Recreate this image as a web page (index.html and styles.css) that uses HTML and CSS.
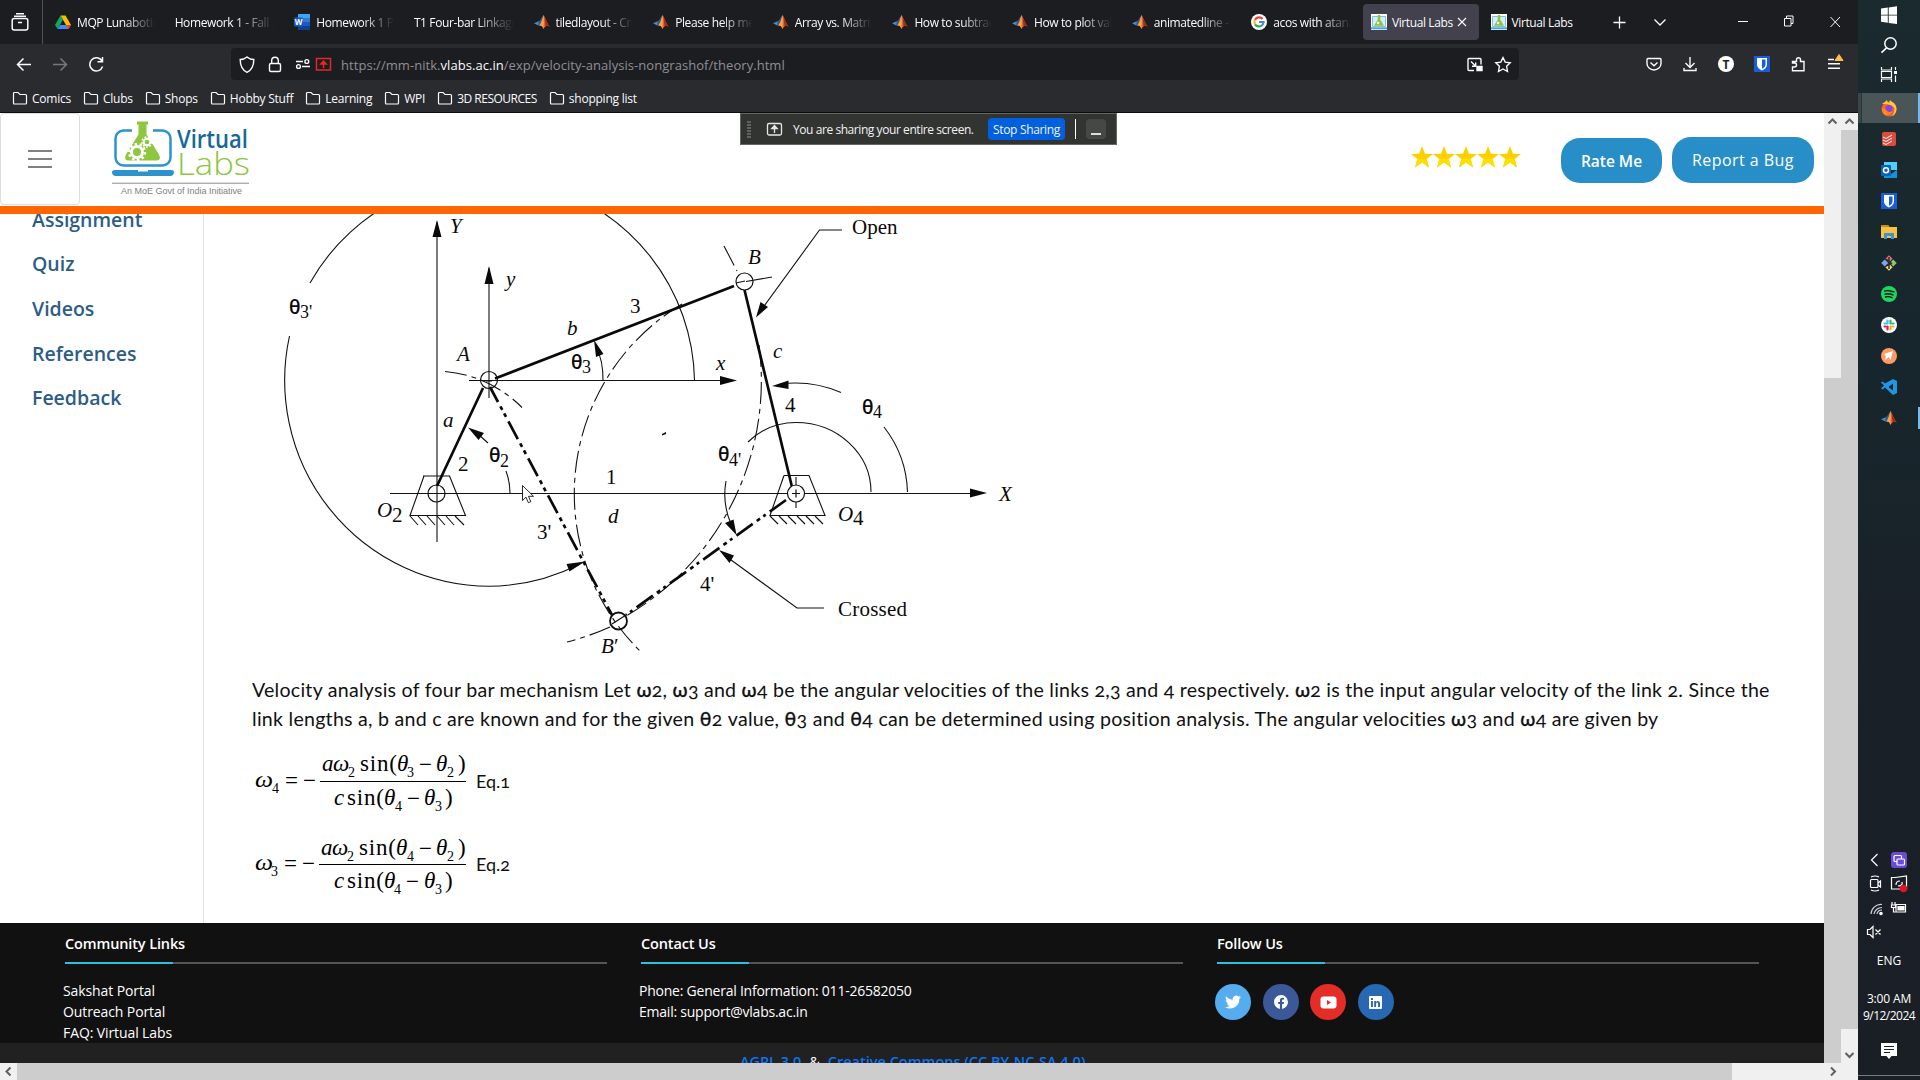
FILE: index.html
```html
<!DOCTYPE html>
<html lang="en">
<head>
<meta charset="utf-8">
<title>Virtual Labs</title>
<link rel="stylesheet" href="styles.css">
</head>
<body>
<svg class="defs" width="0" height="0" aria-hidden="true">
  <symbol id="matlab" viewBox="0 0 16 16"><path d="M0 9.2 4.6 7.3 7 9 4.300 11.500Z" fill="#3f8fd0"/><path d="M4.600 7.300C6.500 6.500 7.600 3 9.500 1.200L7.800 8.700 5.800 11 4.300 11.500Z" fill="#2a5d8f"/><path d="M9.500 1C11 2.500 12.500 8.500 16 13.200 13.500 11.300 12 11 9.500 15 8.500 12.500 7.400 11.300 5 11.700 7.500 9.500 8.500 4 9.500 1Z" fill="#e0622a"/><path d="M9.500 1C10.400 5 9.800 10 9.500 15 8.500 12.500 7.400 11.300 5 11.700 7.500 9.500 8.500 4 9.500 1Z" fill="#f6a04d"/><path d="M10.500 2.500C12 6 13.500 10 16 13.200 14 11.500 12.700 11.400 11.500 12.300Z" fill="#a52a1c"/></symbol>
  <symbol id="folder" viewBox="0 0 16 16"><path d="M1.500 13V3.500a1 1 0 0 1 1-1H6l2 2h5.500a1 1 0 0 1 1 1V13a1 1 0 0 1-1 1h-11a1 1 0 0 1-1-1Z" fill="none" stroke="#fbfbfe" stroke-width="1.200"/></symbol>
  <symbol id="vlabs" viewBox="0 0 16 16"><path d="M0 0h16v16H0z" fill="#fff"/><path d="M1.500 2.500h13v10h-13z" fill="#d7edf8" stroke="#7cc0e4"/><path d="M6.800 1h2.400v4.500l3.800 6.300H3l3.800-6.300Z" fill="#8cc63f"/><circle cx="7" cy="9" r="1.300" fill="#fff"/><path d="M0 13.300h16v2H0z" fill="#4aa5d6"/></symbol>
  <symbol id="bitwarden" viewBox="0 0 16 16"><path d="M0 0h16v16H0z" fill="#175ddc"/><path d="M3 2h10v6.500c0 3-2.500 4.800-5 6-2.500-1.200-5-3-5-6Z" fill="#fff"/><path d="M8 3.500h3.500V8.500c0 2-1.700 3.300-3.500 4.200Z" fill="#175ddc"/></symbol>
  <symbol id="star" viewBox="0 0 22 22"><path d="M11 0l3 7.700 8 .3-6.300 5 2.300 8.500-7-4.900-7 4.900L6.300 13 0 8l8-.3Z" fill="#ffd000"/><path d="M6.300 13H15.700l2.300 8.500-7-4.900-7 4.900Z" fill="#ffdf00"/></symbol>
</svg>

<div class="desktop">
<div class="browser">
  <div class="tabbar">
    <div class="fxview"><svg width="18" height="18" viewBox="0 0 18 18" fill="none" stroke="#fbfbfe" stroke-width="1.500"><rect x="1.200" y="5.500" width="15.600" height="11.500" rx="2"/><path d="M3 3.200h12M5 .8h8M7 9.500h4"/></svg></div>
    <div class="tabs">
      <div class="tab"><svg width="16" height="16" viewBox="0 0 16 16"><path d="M5.500 1.500h5L16 11h-5Z" fill="#ffba00"/><path d="M5.500 1.500 0 11l2.600 4L8 5.800Z" fill="#11a861"/><path d="M5.200 11H16l-2.600 4H2.600Z" fill="#4688f4"/><path d="M11 11h5l-2.600 4Z" fill="#ea4335"/></svg><span>MQP Lunabotics</span></div>
      <div class="tab"><span>Homework 1 - Fall 2024</span></div>
      <div class="tab"><svg width="16" height="16" viewBox="0 0 16 16"><path d="M4 0h12v4H4z" fill="#41a5ee"/><path d="M4 4h12v4H4z" fill="#2b7cd3"/><path d="M4 8h12v4H4z" fill="#185abd"/><path d="M4 12h12v4H4z" fill="#103f91"/><rect y="3.500" width="9" height="9" rx="1" fill="#185abd"/><text x="4.500" y="11" text-anchor="middle" fill="#fff" class="w-mark">W</text></svg><span>Homework 1 Problems</span></div>
      <div class="tab"><span>T1 Four-bar Linkage</span></div>
      <div class="tab"><svg width="16" height="16"><use href="#matlab"/></svg><span>tiledlayout - Create</span></div>
      <div class="tab"><svg width="16" height="16"><use href="#matlab"/></svg><span>Please help me with</span></div>
      <div class="tab"><svg width="16" height="16"><use href="#matlab"/></svg><span>Array vs. Matrix Op</span></div>
      <div class="tab"><svg width="16" height="16"><use href="#matlab"/></svg><span>How to subtract a</span></div>
      <div class="tab"><svg width="16" height="16"><use href="#matlab"/></svg><span>How to plot values</span></div>
      <div class="tab"><svg width="16" height="16"><use href="#matlab"/></svg><span>animatedline - M</span></div>
      <div class="tab"><svg width="16" height="16" viewBox="0 0 16 16" fill="none" stroke-width="2.200"><circle cx="8" cy="8" r="8" fill="#fff" stroke="none"/><path d="M11.600 5A4.600 4.600 0 0 0 4 5.700" stroke="#ea4335"/><path d="M4 5.700a4.600 4.600 0 0 0 0 4.600" stroke="#fbbc05"/><path d="M4 10.300a4.600 4.600 0 0 0 7 1" stroke="#34a853"/><path d="M11 11.300A4.600 4.600 0 0 0 12.600 8H8" stroke="#4285f4"/></svg><span>acos with atan2</span></div>
      <div class="tab active"><svg width="16" height="16"><use href="#vlabs"/></svg><span>Virtual Labs</span><svg class="x" width="10" height="10" viewBox="0 0 10 10"><path d="M1 1l8 8M9 1 1 9" stroke="#fbfbfe" stroke-width="1.100"/></svg></div>
      <div class="tab"><svg width="16" height="16"><use href="#vlabs"/></svg><span>Virtual Labs</span></div>
    </div>
    <div class="tabtools"><svg width="270" height="44" viewBox="1588 0 270 44" fill="none" stroke="#fbfbfe" stroke-width="1.300"><path d="M1613.500 22.500h12M1619.500 16.500v12M1654.500 19.500l5.500 5.500 5.500-5.500"/><path d="M1738 21.500h10M1784.500 18.500h6.500v7.500h-6.500zM1786.500 18v-2h6.500v7.500h-2M1830.500 17l9.500 10M1840 17l-9.500 10" stroke-width="1"/></svg></div>
  </div>
  <div class="navbar">
    <svg class="navbtns" width="231" height="36" viewBox="0 47 231 36" fill="none" stroke="#fbfbfe" stroke-width="1.500"><path d="M31 64.500H18M23.500 58.500l-6 6 6 6"/><path d="M53 64.500h13M60.500 58.500l6 6-6 6" stroke="#77777d"/><path d="M102 61a6.600 6.600 0 1 0 .6 5.500M102.500 57v4.800h-5"/></svg>
    <div class="urlbar">
      <svg width="110" height="32" viewBox="231 48 110 32" fill="none" stroke="#fbfbfe" stroke-width="1.400"><path d="M247 57c2 1.800 4.500 2.500 6.800 2.500 0 6-1.800 10.500-6.800 12.800-5-2.300-6.800-6.800-6.800-12.800 2.300 0 4.800-.7 6.800-2.500Z"/><rect x="269.500" y="63.500" width="11" height="8" rx="1.500"/><path d="M271.700 63.500V60.500a3.300 3.300 0 0 1 6.600 0v3"/><path d="M296 61.500h7M302 66.500h8"/><circle cx="306.800" cy="61.500" r="1.900"/><circle cx="298.500" cy="66.500" r="1.900"/><path d="M316.500 58.500h14v11.500h-14z" stroke="#e22828" stroke-width="1.500"/><path d="M323.500 68v-5M320.800 64l2.700-3 2.700 3Z" stroke="#e22828" fill="#e22828" stroke-width="1.500"/></svg>
      <div class="url">https://mm-nitk.<b>vlabs.ac.in</b>/exp/velocity-analysis-nongrashof/theory.html</div>
      <svg class="urlend" width="52" height="32" viewBox="1467 48 52 32" fill="none" stroke="#fbfbfe" stroke-width="1.400"><path d="M1474 70.500h-5a1 1 0 0 1-1-1v-10a1 1 0 0 1 1-1h11a1 1 0 0 1 1 1v5M1471 61.500l4.500 4.500M1475.700 62.500v3.700h-3.700"/><path d="M1477 66.500h5v4h-5z" fill="#fff"/><path d="M1503 57.500l2.200 4.600 5 .7-3.600 3.500.9 5.200-4.500-2.500-4.500 2.500.9-5.200-3.600-3.500 5-.7Z"/></svg>
    </div>
    <svg width="339" height="36" viewBox="1519 47 339 36" fill="none" stroke="#fbfbfe" stroke-width="1.400"><path d="M1648 58.500h12a1 1 0 0 1 1 1v4a7 6.500 0 0 1-14 0v-4a1 1 0 0 1 1-1ZM1650.500 62.500l3.500 3.300 3.500-3.300"/><path d="M1690 57v10M1685.500 63l4.500 4.500 4.500-4.500M1684 68v2.500h12V68"/><circle cx="1726" cy="64" r="8" fill="#fff" stroke="none"/><svg x="1754" y="56" width="16" height="16"><use href="#bitwarden" stroke="none"/></svg><path d="M1792.500 63h2a2 2 0 0 1 0 4h-2v3.800h11.500v-9.300h-3.500v-1.800a2 2 0 0 0-4 0v1.800h-4Z"/><path d="M1828 59.500h6M1828 63.800h12M1828 68.200h12"/><path d="M1839 54.500l4 6h-8Z" fill="#ffbd4f" stroke="#ffbd4f" stroke-width="1"/><text x="1726" y="68.500" text-anchor="middle" class="t-mark">T</text></svg>
  </div>
  <div class="bookmarks">
    <div><svg width="16" height="16"><use href="#folder"/></svg><span>Comics</span></div>
    <div><svg width="16" height="16"><use href="#folder"/></svg><span>Clubs</span></div>
    <div><svg width="16" height="16"><use href="#folder"/></svg><span>Shops</span></div>
    <div><svg width="16" height="16"><use href="#folder"/></svg><span>Hobby Stuff</span></div>
    <div><svg width="16" height="16"><use href="#folder"/></svg><span>Learning</span></div>
    <div><svg width="16" height="16"><use href="#folder"/></svg><span>WPI</span></div>
    <div><svg width="16" height="16"><use href="#folder"/></svg><span class="caps">3D RESOURCES</span></div>
    <div><svg width="16" height="16"><use href="#folder"/></svg><span>shopping list</span></div>
  </div>

  <div class="viewport">
    <div class="page">
      <header class="site-header">
        <div class="burger"><i></i><i></i><i></i></div>
        <svg class="logo" width="142" height="78" viewBox="110 119 142 78">
          <rect x="115.500" y="130.500" width="55" height="35" rx="8" fill="none" stroke="#2c94cb" stroke-width="2.500"/>
          <path d="M132 126h21v10h-21z" fill="#fff"/>
          <path d="M137 121.500h11v3h-1.500v10l12.500 20q3 6-3 6h-27q-6 0-3-6l12.500-20v-10H137Z" fill="#8dc63f"/>
          <circle cx="137" cy="152" r="5.500" fill="none" stroke="#fff" stroke-width="3"/><circle cx="137" cy="152" r="8" fill="none" stroke="#fff" stroke-width="2.500" stroke-dasharray="2.600 2.400"/>
          <circle cx="147" cy="142" r="3.300" fill="none" stroke="#fff" stroke-width="2"/><circle cx="147" cy="142" r="5" fill="none" stroke="#fff" stroke-width="1.600" stroke-dasharray="1.800 1.600"/>
          <path d="M112 172q0-2 3-2h23v1.500h10V170h23q3 0 3 2 0 4-4 4h-54q-4 0-4-4Z" fill="#2c94cb"/>
          <text x="177" y="148" textLength="71" lengthAdjust="spacingAndGlyphs" class="l-virtual">Virtual</text>
          <text x="177" y="175" textLength="73" lengthAdjust="spacingAndGlyphs" class="l-labs">Labs</text>
          <path d="M112 183.200h137" stroke="#8a8a8a"/>
          <text x="121" y="194" textLength="121" lengthAdjust="spacingAndGlyphs" class="l-tag">An MoE Govt of India Initiative</text>
        </svg>
        <div class="header-right">
          <div class="stars"><svg width="22" height="22"><use href="#star"/></svg><svg width="22" height="22"><use href="#star"/></svg><svg width="22" height="22"><use href="#star"/></svg><svg width="22" height="22"><use href="#star"/></svg><svg width="22" height="22"><use href="#star"/></svg></div>
          <div class="btn rate">Rate Me</div>
          <div class="btn bug">Report a Bug</div>
        </div>
      </header>
      <div class="content">
        <nav class="sidebar">
          <a>Assignment</a><a>Quiz</a><a>Videos</a><a>References</a><a>Feedback</a>
        </nav>
        <main>
          <svg class="diagram" width="800" height="446" viewBox="252 214 800 446">
            <g fill="none" stroke="#111" stroke-width="1.100">
              <path d="M437 222V542M489 268V398M469 380.500H722M390 493.500H972"/>
              <path d="M694.500 380A205.500 206 0 0 0 310 283M289.500 336A205.500 206 0 0 0 489 586.300A205.500 206 0 0 0 580 564"/>
              <g stroke-dasharray="22 5 5 5"><path d="M445 371.500A123 123 0 0 1 522 407.500"/><path d="M682 304A221 221 0 0 0 640 651"/><path d="M724 246 737 271M759 345A272 272 0 0 1 626 616M610 627Q590 636 567 642"/></g>
              <path d="M746 281.500 772 277M736 283l9-2"/>
              <path d="M488 443 478 434M506 471Q510 482 510 493M603 380Q603 360 597 350"/>
              <path d="M907.500 492A111 111 0 0 0 884 427M841 392.500Q812 380 780 384"/>
              <path d="M871 492A75 69.500 0 0 0 796 422.500Q768 422.500 748 442M726 481Q722 503 731 524"/>
              <path d="M842 230H819.500L762 309M824 608H797L727 557"/>
              <path d="M423 476H450M424 476 410 515.500H465.500L449.500 476M784 475.500H809L825 515.500H770L784 475.500M796 477v31"/>
              <path d="M410 516l8 9M418 516l8 9M427 516l8 9M437 516l8 9M446 516l8 9M455 516l9 9M770 516l8 8M779 516l8 8M788 516l8 8M797 516l8 8M806 516l8 8M815 516l8 8"/>
            </g>
            <g fill="#0a0a0a"><path d="M437 220l4.500 17h-9ZM489 266l4.500 18h-9ZM737 380.500l-17 4.500v-9ZM987 493l-17 4.500v-9ZM594 340l9.500 14-7.500 3ZM585 561.500l-15.500 10-3-7.500ZM468 427.500l16 5.500-5.500 7ZM772 386l16.500-5.500v8.500ZM756 317.500l4.500-15.500 7.500 5ZM736.500 535l-11.500-12 8.500-3.500ZM719 550l15 5.500-4.500 7.500Z"/><path d="M662 434l4-2v2l-4 1.500Z"/></g>
            <g fill="none" stroke="#0a0a0a" stroke-width="2.700"><path d="M495 378.500 734 286M744.500 290 792 487M483 388 437 486"/><path d="M490 387 612 615" stroke-dasharray="20 5 4 4 4 5" stroke-dashoffset="3"/><path d="M786 500 626 615" stroke-dasharray="20 5 3 4 4 5"/></g>
            <g fill="none" stroke="#111" stroke-width="1.200"><circle cx="489" cy="380" r="8.500"/><circle cx="744.500" cy="281.500" r="8.500"/><circle cx="436.500" cy="493.500" r="8.500"/><circle cx="796" cy="493.500" r="8.500" fill="#fff"/><circle cx="618.500" cy="621" r="8.500" stroke-width="1.800"/><path d="M612 624 626 615M792 493.500h8M796 489.500v8M486 381h6"/></g>
            <g class="dg">
              <g class="it"><text x="450" y="233">Y</text><text x="506" y="286">y</text><text x="457" y="361">A</text><text x="567" y="335">b</text><text x="443" y="427">a</text><text x="377" y="517">O</text><text x="608" y="523">d</text><text x="601" y="653">B</text><text x="748" y="264">B</text><text x="773" y="358">c</text><text x="716" y="370">x</text><text x="838" y="521">O</text><text x="999" y="501">X</text></g>
              <text x="630" y="313">3</text><text x="458" y="471">2</text><text x="392" y="522">2</text><text x="606" y="484">1</text><text x="537" y="539">3'</text><text x="614" y="653">′</text><text x="785" y="412">4</text><text x="700" y="591">4'</text><text x="852" y="234">Open</text><text x="838" y="616" textLength="69">Crossed</text><text x="853" y="525">4</text>
              <g class="th"><text x="289" y="314">θ</text><text x="571" y="369">θ</text><text x="489" y="462">θ</text><text x="862" y="414">θ</text><text x="718" y="461">θ</text></g>
              <g class="sub"><text x="300" y="318">3'</text><text x="582" y="373">3</text><text x="500" y="467">2</text><text x="873" y="418">4</text><text x="729" y="466">4'</text></g>
            </g>
            <path d="M522.500 485.500v15l3.500-3.300 2.300 5.500 2.500-1-2.300-5.400h5Z" fill="#fff" stroke="#111" stroke-width=".9"/>
          </svg>
          <p class="para"><span class="l1">Velocity analysis of four bar mechanism Let <b>ω</b>2, <b>ω</b>3 and <b>ω</b>4 be the angular velocities of the links 2,3 and 4 respectively. <b>ω</b>2 is the input angular velocity of the link 2. Since the</span><br><span class="l2">link lengths a, b and c are known and for the given <b>θ</b>2 value, <b>θ</b>3 and <b>θ</b>4 can be determined using position analysis. The angular velocities <b>ω</b>3 and <b>ω</b>4 are given by</span></p>
          <div class="eqs">
            <div class="eq"><svg width="216" height="83" viewBox="252 740 216 83"><g class="ma">
              <text class="it" x="255" y="787" textLength="18" lengthAdjust="spacingAndGlyphs">ω</text><text class="ms" x="272" y="793">4</text><text x="285" y="788">=</text><text x="303" y="788">−</text><path d="M320 781.500h146" stroke="#000" stroke-width="1.200"/>
              <text class="it" x="322" y="771">a</text><text class="it" x="333" y="771">ω</text><text class="ms" x="348" y="777">2</text><text x="360" y="771" textLength="37">sin(</text><text class="it" x="397" y="771">θ</text><text class="ms" x="407" y="777">3</text><text x="419" y="772">−</text><text class="it" x="436" y="771">θ</text><text class="ms" x="447" y="777">2</text><text x="458" y="771">)</text>
              <text class="it" x="334" y="805">c</text><text x="347" y="805" textLength="37">sin(</text><text class="it" x="384" y="805">θ</text><text class="ms" x="395" y="811">4</text><text x="407" y="806">−</text><text class="it" x="424" y="805">θ</text><text class="ms" x="435" y="811">3</text><text x="445" y="805">)</text></g></svg><span>Eq.1</span></div>
            <div class="eq"><svg width="216" height="83" viewBox="252 740 216 83"><g class="ma">
              <text class="it" x="255" y="787" textLength="18" lengthAdjust="spacingAndGlyphs">ω</text><text class="ms" x="271" y="793">3</text><text x="284" y="788">=</text><text x="302" y="788">−</text><path d="M319 781.500h147" stroke="#000" stroke-width="1.200"/>
              <text class="it" x="321" y="772">a</text><text class="it" x="332" y="772">ω</text><text class="ms" x="347" y="778">2</text><text x="359" y="772" textLength="37">sin(</text><text class="it" x="396" y="772">θ</text><text class="ms" x="407" y="778">4</text><text x="419" y="773">−</text><text class="it" x="436" y="772">θ</text><text class="ms" x="447" y="778">2</text><text x="458" y="772">)</text>
              <text class="it" x="334" y="805">c</text><text x="347" y="805" textLength="37">sin(</text><text class="it" x="384" y="805">θ</text><text class="ms" x="394" y="811">4</text><text x="406" y="806">−</text><text class="it" x="424" y="805">θ</text><text class="ms" x="435" y="811">3</text><text x="445" y="805">)</text></g></svg><span>Eq.2</span></div>
          </div>
        </main>
      </div>
      <footer>
        <section><h4>Community Links</h4><p>Sakshat Portal<br>Outreach Portal<br>FAQ: Virtual Labs</p></section>
        <section><h4>Contact Us</h4><p class="contact">Phone: General Information: 011-26582050<br>Email: support@vlabs.ac.in</p></section>
        <section><h4>Follow Us</h4>
          <div class="social">
            <div class="tw"><svg width="16" height="16" viewBox="0 0 24 24"><path fill="#fff" d="M24 4.600a10 10 0 0 1-2.800.8 5 5 0 0 0 2.100-2.700 10 10 0 0 1-3.100 1.200 4.900 4.900 0 0 0-8.400 4.500A14 14 0 0 1 1.700 3.200a4.900 4.900 0 0 0 1.500 6.500 5 5 0 0 1-2.200-.6 4.900 4.900 0 0 0 3.900 4.900 5 5 0 0 1-2.200.1 4.900 4.900 0 0 0 4.600 3.400A10 10 0 0 1 0 19.500a14 14 0 0 0 21.500-12.400A10 10 0 0 0 24 4.600Z"/></svg></div>
            <div class="fb"><svg width="14" height="14" viewBox="0 0 24 24"><path fill="#fff" d="M24 12A12 12 0 1 0 10.100 23.900v-8.400h-3V12h3V9.400c0-3 1.800-4.700 4.500-4.700 1.300 0 2.700.2 2.700.2v3h-1.500c-1.500 0-2 .9-2 1.900V12h3.400l-.5 3.500h-2.800v8.400A12 12 0 0 0 24 12Z"/></svg></div>
            <div class="yt"><svg width="17" height="13" viewBox="0 0 17 13"><rect x=".5" y=".5" width="16" height="12" rx="3" fill="#fff"/><path d="M7 4l4 2.500L7 9Z" fill="#e52d27"/></svg></div>
            <div class="li"><svg width="13" height="13" viewBox="0 0 13 13"><rect width="13" height="13" rx="1" fill="#fff"/><path d="M2 5h1.900v6H2zM2 2h1.900v1.900H2zM5.200 5H7v.9C8 4.500 11 4.500 11 7.500V11H9.100V8c0-2-2-2-2 0v3H5.200Z" fill="#2867b2"/></svg></div>
          </div>
        </section>
      </footer>
      <div class="license"><a>AGPL 3.0</a><span>&amp;</span><a>Creative Commons (CC BY-NC-SA 4.0)</a></div>
    </div>
    <div class="vs inner"><svg width="17" height="17" viewBox="0 0 17 17"><path d="M4.500 10.500l4-4 4 4" fill="none" stroke="#606060" stroke-width="2"/></svg><i></i></div>
    <div class="vs outer"><svg width="17" height="17" viewBox="0 0 17 17"><path d="M4.500 10.500l4-4 4 4" fill="none" stroke="#606060" stroke-width="2"/></svg><i></i><svg width="17" height="51" viewBox="0 0 17 51"><path d="M4.500 24l4 4 4-4" fill="none" stroke="#606060" stroke-width="2"/></svg></div>
  </div>
  <div class="hs"><svg width="17" height="17" viewBox="0 0 17 17"><path d="M10.500 4.500l-4 4 4 4" fill="none" stroke="#606060" stroke-width="2"/></svg><i></i><svg width="109" height="17" viewBox="0 0 109 17"><path d="M99 4.500l4 4-4 4" fill="none" stroke="#606060" stroke-width="2"/></svg></div>

  <div class="share">
    <svg width="52" height="30" viewBox="741 114 52 30"><path d="M749 121.500v18" stroke="#8d8f8d" stroke-width="4" stroke-dasharray="1 2"/><rect x="767.500" y="123.500" width="14" height="11.500" rx="1.500" fill="none" stroke="#e6e6e6" stroke-width="1.300"/><path d="M774.500 133v-6M771.800 128.500l2.700-3 2.700 3Z" stroke="#e6e6e6" stroke-width="1.300" fill="#e6e6e6"/></svg>
    <span class="msg">You are sharing your entire screen.</span>
    <span class="stop">Stop Sharing</span>
    <i class="div"></i><span class="mini"></span>
  </div>
</div>

<div class="taskbar">
  <svg width="62" height="840" viewBox="1858 0 62 840">
    <path d="M1881 8.500l6.800-1v7.200H1881zM1888.700 7.400l8.300-1.200v8.500h-8.300zM1881 15.600h6.800v7.200l-6.800-1zM1888.700 15.600h8.300v8.500l-8.300-1.200z" fill="#fff"/>
    <circle cx="1890.500" cy="43.500" r="5.700" fill="none" stroke="#fff" stroke-width="1.500"/><path d="M1886.500 47.800l-5 4.800" stroke="#fff" stroke-width="1.600"/>
    <path d="M1881.500 67v3h10v-3M1881.500 82v-3h10v3M1881.500 71.500h10v6h-10zM1895.500 67v3M1895.500 75.500v6.500" fill="none" stroke="#fff" stroke-width="1.200"/><path d="M1894 71h3v3h-3z" fill="#fff"/>
    <path d="M1858 93h3.500v30h-3.500z" fill="#39464a"/><path d="M1862 93h56v30h-56z" fill="#4a5558"/><path d="M1918 93h2v30h-2z" fill="#76b9ed"/>
    <circle cx="1889" cy="109" r="7.500" fill="#ff5a36"/><path d="M1882 104q3-2 5-4 0 2 2 3l1-3 1.500 1.500Q1897 104 1896.500 110q-1 5-5 6.500 3-3 3-8-2-5-12.500-4.500Z" fill="#ffc83a"/><circle cx="1889" cy="108.500" r="3.500" fill="#7a4be0"/><path d="M1882 108q3 0 4 2 2 3 6 1.500-2 4-6 3.500-4-1-4-7Z" fill="#ff8a1e"/>
    <rect x="1882" y="132" width="14" height="14" rx="2" fill="#dc4c3e"/><path d="M1883 137l3 1.500 6-3.500M1883 140l3 1.500 6-3.500M1883 143l3 1.500 6-3.500" stroke="#fff" fill="none"/>
    <path d="M1884 162h13v8h-13z" fill="#50d0f8"/><path d="M1884 170l7 4 6-4v8h-13Z" fill="#1490df"/><rect x="1881" y="165" width="10" height="11" rx="1" fill="#0a62b8"/><circle cx="1886" cy="170.300" r="2.500" fill="none" stroke="#fff" stroke-width="1.500"/>
    <svg x="1881" y="193" width="16" height="16"><use href="#bitwarden"/></svg>
    <path d="M1881 225h7l1.500 2h7.500v11h-16z" fill="#f5c242"/><path d="M1881 225h7l1.500 2H1881z" fill="#c98e17"/><path d="M1884 239v-6h10v6h-3v-3h-4v3Z" fill="#3f93d2"/>
    <g transform="rotate(45 1889 263)"><path d="M1883.500 257.500h5v5h-5z" fill="#e8767a"/><path d="M1889.500 257.500h5v5h-5z" fill="#8cc665"/><path d="M1883.500 263.500h5v5h-5z" fill="#7da6f0"/><path d="M1889.500 263.500h5v5h-5z" fill="#f6d87a"/></g><path d="M1889 257v12M1886 259l6 5M1886 266l6-3" stroke="#2d2d2d" stroke-width="1.500"/>
    <circle cx="1889" cy="294" r="8" fill="#1ed760"/><path d="M1884 291.200q5-1.500 10.500 1M1884.500 294.200q4.500-1.200 9 1M1885 297q4-1 7.500.8" fill="none" stroke="#111" stroke-width="1.400"/>
    <circle cx="1889" cy="325" r="8" fill="#fff"/><g stroke-width="2.200" stroke-linecap="round"><path d="M1887.500 320.500v3M1884.500 323.500h3" stroke="#36c5f0"/><path d="M1890.500 320.500v3M1893.500 323.500h-1" stroke="#2eb67d"/><path d="M1890.500 326.500h3M1890.500 328.500v1" stroke="#ecb22e"/><path d="M1887.500 326.500v3M1884.500 326.500h1" stroke="#e01e5a"/></g>
    <circle cx="1889" cy="356" r="8" fill="#ff9a62"/><path d="M1884 354l9-3-2.500 9-2-3-3.500 3.500.8-4.500Z" fill="#fff"/>
    <path d="M1893 379l4 2v12l-4 2-8-7.500-2.500 2-1.500-1 3-3-3-3 1.500-1 2.500 2Zm0 4.500-4.500 3.500 4.500 3.500Z" fill="#2196e3"/>
    <svg x="1881" y="410" width="16" height="16"><use href="#matlab"/></svg><path d="M1918 407h2v22h-2z" fill="#76b9ed"/>
  </svg>
  <svg width="62" height="108" viewBox="1858 840 62 108" fill="none" stroke="#fff" stroke-width="1.200"><path d="M1877.500 854l-6 6 6 6"/><rect x="1891" y="852" width="16" height="16" rx="3" fill="#6a4bd6" stroke="none"/><rect x="1894" y="855.500" width="7.500" height="6" rx="1"/><rect x="1897" y="859" width="7.500" height="6" rx="1" fill="#6a4bd6"/><rect x="1870.500" y="879.500" width="7.500" height="8" rx="1"/><path d="M1878 883l2.500-2v6l-2.500-2M1871 877q4-2 8 0M1871 890q4 2 8 0"/><path d="M1891.500 877.500h4l11-1.500v13h-15zM1896 885q0-4 4-4M1898 886q5 0 4-4"/><circle cx="1903.500" cy="888.500" r="3.700" fill="#e81123" stroke="none"/><path d="M1871 914a10 10 0 0 1 11-9.500M1874 914a8 8 0 0 1 8-6.500M1877 914a5 5 0 0 1 5-4" stroke="#cfd3d6"/><circle cx="1881" cy="913.500" r="1.200" fill="#fff"/><path d="M1896 904.500h9.500v7.500h-9.500z"/><path d="M1898 906.500h6v3.500h-6z" fill="#fff"/><path d="M1892 902v3M1895 902v3M1891.500 905h4v2.500h-4zM1893.500 908v4h2"/><path d="M1867.500 929.500h2.500l3-3v11l-3-3h-2.500zM1875.500 929.500l5 5M1880.500 929.500l-5 5"/></svg>
  <div class="eng">ENG</div>
  <div class="clock">3:00 AM<br><span class="date">9/12/2024</span></div>
  <svg width="62" height="53" viewBox="1858 1027 62 53"><path d="M1881 1043h16v13h-5.500l-2.500 3-2.500-3h-5.500Z" fill="#fff"/><path d="M1884 1046.500h10M1884 1049.500h10M1884 1052.500h6" stroke="#1b2026"/><path d="M1858 1075.500h62" stroke="#767b80"/></svg>
</div>
</div>
</body>
</html>
```
FILE: styles.css
```css
* { box-sizing: border-box; }
body { margin: 0; width: 1920px; height: 1080px; overflow: hidden; background: #fff; font-family: "Open Sans", "Noto Sans", sans-serif; }
svg { display: block; flex: none; }
.defs { position: absolute; }
.desktop { display: flex; height: 1080px; }
.browser { position: relative; width: 1858px; height: 1080px; display: flex; flex-direction: column; flex: none; }

.tabbar { height: 44px; background: #1c1d20; display: flex; }
.fxview { width: 43px; border-right: 1px solid #505157; padding: 13px 0 0 11px; flex: none; }
.tabs { display: flex; gap: 4px; padding: 4px 0 0 4px; width: 1555px; flex: none; }
.tab { width: 115.630px; height: 36px; border-radius: 4px; padding: 0 8px; display: flex; align-items: center; gap: 6px; color: #fbfbfe; font-size: 12px; flex: none; }
.tab span { flex: 1; min-width: 0; overflow: hidden; white-space: nowrap; letter-spacing: -0.380px; -webkit-mask-image: linear-gradient(to right, #000 60%, transparent); mask-image: linear-gradient(to right, #000 60%, transparent); }
.tab.active { background: #42414d; gap: 5px; }
.tab.active span, .tab:last-child span { -webkit-mask-image: none; mask-image: none; overflow: visible; }
.tab:last-child { gap: 5px; }
.tab.active .x { margin-right: 4px; }
.tabtools { margin-left: auto; margin-right: -10px; width: 270px; margin-left: -10px; }
.w-mark { font: bold 8px "Open Sans", sans-serif; }
.t-mark { font: bold 12px "Open Sans", sans-serif; fill: #1c1d20; stroke: none; }

.navbar { height: 36px; background: #2a2b2f; display: flex; align-items: flex-start; }
.navbar > svg { margin-top: 3px; margin-bottom: -3px; }
.urlbar { width: 1288px; height: 32px; margin-top: 4px; background: #1c1d20; border-radius: 4px; display: flex; align-items: center; flex: none; }
.url { color: #8f8f95; font-size: 13px; letter-spacing: 0.050px; white-space: nowrap; padding-top: 2px; }
.url b { color: #fbfbfe; font-weight: 400; }
.urlend { margin-left: auto; }

.bookmarks { height: 33px; background: #2a2b2f; border-bottom: 1px solid #0c0c0d; display: flex; align-items: center; padding: 4px 0 0 12px; color: #fbfbfe; font-size: 12px; }
.bookmarks div { display: flex; align-items: center; gap: 4px; margin-right: 12px; white-space: nowrap; }
.bookmarks span { letter-spacing: -0.240px; }
.bookmarks .caps { letter-spacing: -0.500px; }

.viewport { display: flex; height: 950px; flex: none; }
.page { width: 1824px; background: #fff; overflow: hidden; display: flex; flex-direction: column; }
.site-header { height: 101px; border-bottom: 8px solid #f60; display: flex; align-items: flex-start; flex: none; }
.burger { width: 80px; height: 92px; border: 1px solid #dedede; border-radius: 4px; display: flex; flex-direction: column; gap: 6px; padding: 36px 27px 0; }
.burger i { height: 2px; background: #808080; }
.logo { margin: 6px 0 0 30px; }
.header-right { margin-left: auto; display: flex; padding-right: 10px; }
.stars { display: flex; margin: 33px 40px 0 0; }
.btn { background: #288ec8; color: #fff; border-radius: 19px; display: flex; align-items: center; justify-content: center; white-space: nowrap; }
.rate { width: 101px; height: 45px; margin: 25px 10px 0 0; font-size: 15.500px; font-weight: 600; }
.bug { width: 142px; height: 46px; margin-top: 24px; font-size: 16px; letter-spacing: 0.450px; }
.l-virtual { font: 600 26px "Open Sans", sans-serif; fill: #15689b; }
.l-labs { font: 300 32px "Open Sans", sans-serif; fill: #8dc63f; }
.l-tag { font: 9.500px "Liberation Sans", sans-serif; fill: #808080; }

.content { height: 709px; display: flex; overflow: hidden; flex: none; }
.sidebar { width: 204px; border-right: 1px solid #e2e2e2; padding-left: 32px; flex: none; display: flex; flex-direction: column; margin-top: -16.500px; }
.sidebar a { height: 44.700px; line-height: 44.700px; flex: none; color: #2c5d87; font-weight: 600; font-size: 19.500px; }
main { padding-left: 48px; font-family: Lato, "Open Sans", sans-serif; color: #212529; font-variant-numeric: oldstyle-nums; }
.para { margin: 15px 0 0; font-size: 19.600px; line-height: 29px; white-space: nowrap; color: #111; height: 65px; }
.para b { font-weight: 500; -webkit-text-stroke: 0.300px #111; }
.l1 { letter-spacing: 0.240px; }
.l2 { letter-spacing: 0.255px; }
.eq { display: flex; height: 83px; align-items: center; gap: 8px; font-size: 18px; color: #111; }
.eq span { padding-bottom: 2px; }
.dg { font: 21px "Liberation Serif", serif; fill: #0a0a0a; }
.it { font-style: italic; }
.th { font: 600 19px "Open Sans", sans-serif; }
.sub { font-size: 18px; }
.ma { font: 23px "Liberation Serif", serif; fill: #000; }
.ms { font-size: 14px; }

footer { height: 120px; background: #111; display: flex; padding-left: 65px; gap: 34px; flex: none; color: #fff; }
footer section { width: 542px; }
footer h4 { margin: 0; height: 41px; line-height: 42px; font-size: 14.500px; font-weight: 600; letter-spacing: -0.130px; border-bottom: 2px solid #555; position: relative; }
footer h4::after { content: ""; position: absolute; left: 0; bottom: -2px; width: 108px; height: 2px; background: #2cc0da; }
footer p { margin: 16px 0 0 -2px; font: 14px/21px "Open Sans", sans-serif; letter-spacing: -0.100px; white-space: nowrap; }
footer .contact { letter-spacing: -0.230px; }
.social { display: flex; gap: 11.500px; margin: 20px 0 0 -2px; }
.social div { width: 36px; height: 36px; border-radius: 50%; display: flex; align-items: center; justify-content: center; }
.tw { background: #55acee; } .fb { background: #3b5998; } .yt { background: #e52d27; } .li { background: #2867b2; }
.license { height: 20px; background: #212121; color: #fff; overflow: hidden; display: flex; gap: 8px; padding: 8px 0 0 740px; font-size: 14.500px; line-height: 21px; white-space: nowrap; flex: none; }
.license a { color: #0b75f0; font-weight: 600; }

.vs { width: 17px; display: flex; flex-direction: column; background: #f0f0f0; }
.inner i { margin-top: 248px; flex: 1; background: #cdcdcd; }
.outer { height: 967px; flex: none; position: relative; }
.outer i { flex: 1; background: #cdcdcd; }
.hs { height: 17px; width: 1841px; display: flex; background: #f0f0f0; }
.hs i { flex: 1; background: #cdcdcd; }

.share { position: absolute; left: 740px; top: 113px; width: 377px; height: 32px; background: #323432; border: 1px solid #646664; display: flex; align-items: center; color: #f2f2f2; font-size: 12px; white-space: nowrap; }
.msg { width: 195px; letter-spacing: -0.430px; }
.stop { width: 77px; height: 22px; border-radius: 4px; background: #0060df; display: flex; align-items: center; justify-content: center; letter-spacing: -0.330px; }
.div { width: 1px; height: 20px; background: #fff; margin: 0 10px; }
.mini { width: 20px; height: 20px; border-radius: 4px; background: #464846; display: flex; align-items: flex-end; justify-content: center; }
.mini::after { content: ""; width: 10px; height: 2px; background: #ddd; margin-bottom: 4px; }

.taskbar { width: 62px; background: linear-gradient(#1a2a2e, #17262c 35%, #1a2028 60%, #1a1f26); color: #fff; font-size: 12px; text-align: center; flex: none; }
.eng { height: 26px; line-height: 26px; }
.clock { height: 53px; padding-top: 16px; line-height: 17px; white-space: nowrap; letter-spacing: -0.150px; }
.date { letter-spacing: -0.520px; }
```
